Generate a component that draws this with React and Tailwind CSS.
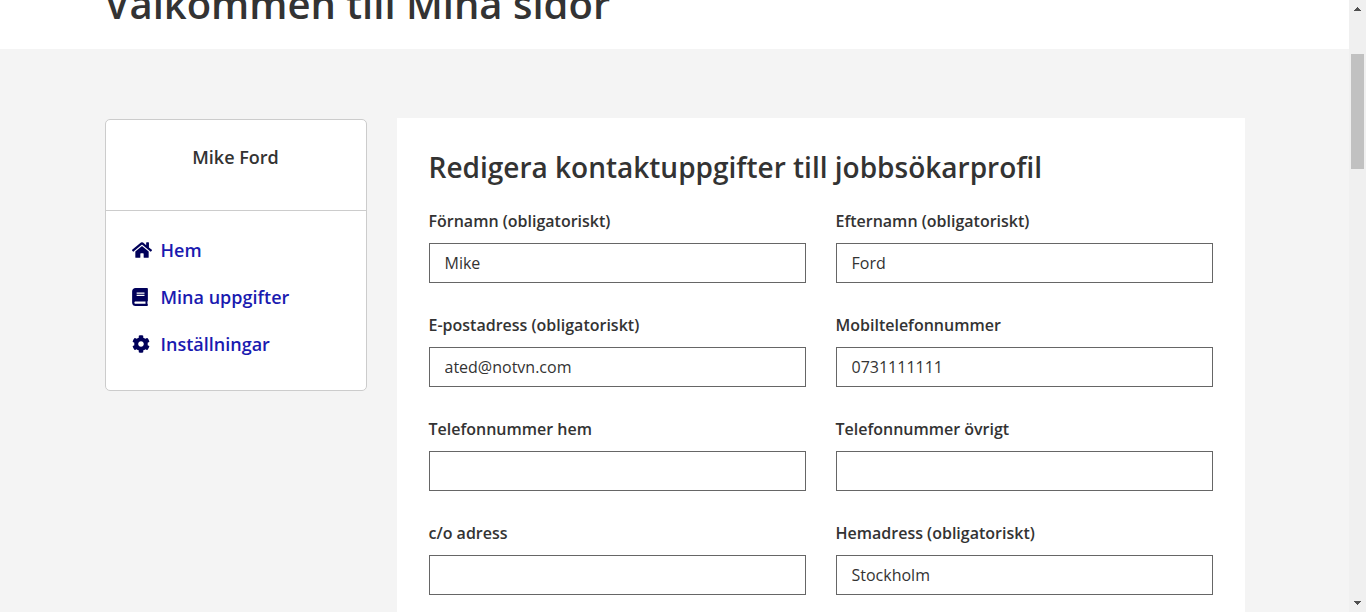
import { FaHome, FaBook, FaCog } from "react-icons/fa";

const links = [
  { label: "Hem", Icon: FaHome, size: "h-[18px] w-5" },
  { label: "Mina uppgifter", Icon: FaBook, size: "h-[18px] w-4" },
  { label: "Inställningar", Icon: FaCog, size: "h-[18px] w-[18px]" },
];

const fields = [
  { id: "fornamn", label: "Förnamn (obligatoriskt)", value: "Mike" },
  { id: "efternamn", label: "Efternamn (obligatoriskt)", value: "Ford" },
  { id: "epost", label: "E-postadress (obligatoriskt)", value: "ated@notvn.com", type: "email" },
  { id: "mobil", label: "Mobiltelefonnummer", value: "0731111111", type: "tel" },
  { id: "telefon-hem", label: "Telefonnummer hem", value: "", type: "tel" },
  { id: "telefon-ovrigt", label: "Telefonnummer övrigt", value: "", type: "tel" },
  { id: "co-adress", label: "c/o adress", value: "" },
  { id: "hemadress", label: "Hemadress (obligatoriskt)", value: "Stockholm" },
];

function Field({ id, label, value, type = "text" }) {
  return (
    <div className="flex flex-col gap-2.5">
      <label htmlFor={id} className="text-base leading-6 font-semibold">
        {label}
      </label>
      <input
        id={id}
        type={type}
        defaultValue={value}
        className="h-10 w-full border border-[#666] bg-white px-[15px] text-base font-normal outline-none"
      />
    </div>
  );
}

function Sidebar() {
  return (
    <aside className="mt-px w-[262px] shrink-0 rounded-[5px] border border-[#ccc] bg-white text-lg font-semibold">
      <p className="border-b border-[#ccc] pt-6 pb-[39px] text-center leading-[27px]">Mike Ford</p>
      <nav className="px-[26px] pt-[26px] pb-[32px]">
        <ul className="flex flex-col gap-5">
          {links.map(({ label, Icon, size }) => (
            <li key={label}>
              <a href="#" className="flex items-center leading-[27px] text-[#1a1ab0]">
                <span className="flex w-[29px] shrink-0 pb-0.5">
                  <Icon aria-hidden="true" className={`${size} text-[#00005a]`} />
                </span>
                {label}
              </a>
            </li>
          ))}
        </ul>
      </nav>
    </aside>
  );
}

function Scrollbar() {
  return (
    <div aria-hidden="true" className="flex w-[17px] shrink-0 flex-col items-center bg-[#f0f0f0]">
      <svg viewBox="0 0 17 17" className="h-[17px] w-[17px] fill-[#505050]" shapeRendering="crispEdges">
        <path d="M8 7h1v1h1v1h1v1h1v1H5v-1h1V9h1V8h1z" />
      </svg>
      <div className="mt-[37px] h-[115px] w-[13px] bg-[#c1c1c1]" />
      <svg viewBox="0 0 17 17" className="mt-auto h-[17px] w-[17px] fill-[#505050]" shapeRendering="crispEdges">
        <path d="M5 6h7v1h-1v1h-1v1H9v1H8V9H7V8H6V7H5z" />
      </svg>
    </div>
  );
}

export default function App() {
  return (
    <div className="flex h-screen overflow-hidden bg-[#f4f4f4] font-['Open_Sans','Noto_Sans',sans-serif] text-[#333]">
      <div className="min-w-0 flex-1 overflow-hidden">
        <header className="flex h-[49px] items-end overflow-hidden bg-white">
          <div className="mx-auto w-full max-w-[1140px] pb-[18px]">
            <h1 className="text-[40px] leading-[54px] font-semibold">Välkommen till Mina sidor</h1>
          </div>
        </header>
        <div className="mx-auto flex w-full max-w-[1140px] items-start gap-[30px] pt-[69px]">
          <Sidebar />
          <main className="min-w-0 flex-1 bg-white p-8">
            <h2 className="text-[28px] leading-[34px] font-semibold">Redigera kontaktuppgifter till jobbsökarprofil</h2>
            <form className="mt-[25px] grid grid-cols-2 gap-x-[30px] gap-y-[30px]">
              {fields.map((field) => (
                <Field key={field.id} {...field} />
              ))}
            </form>
          </main>
        </div>
      </div>
      <Scrollbar />
    </div>
  );
}
